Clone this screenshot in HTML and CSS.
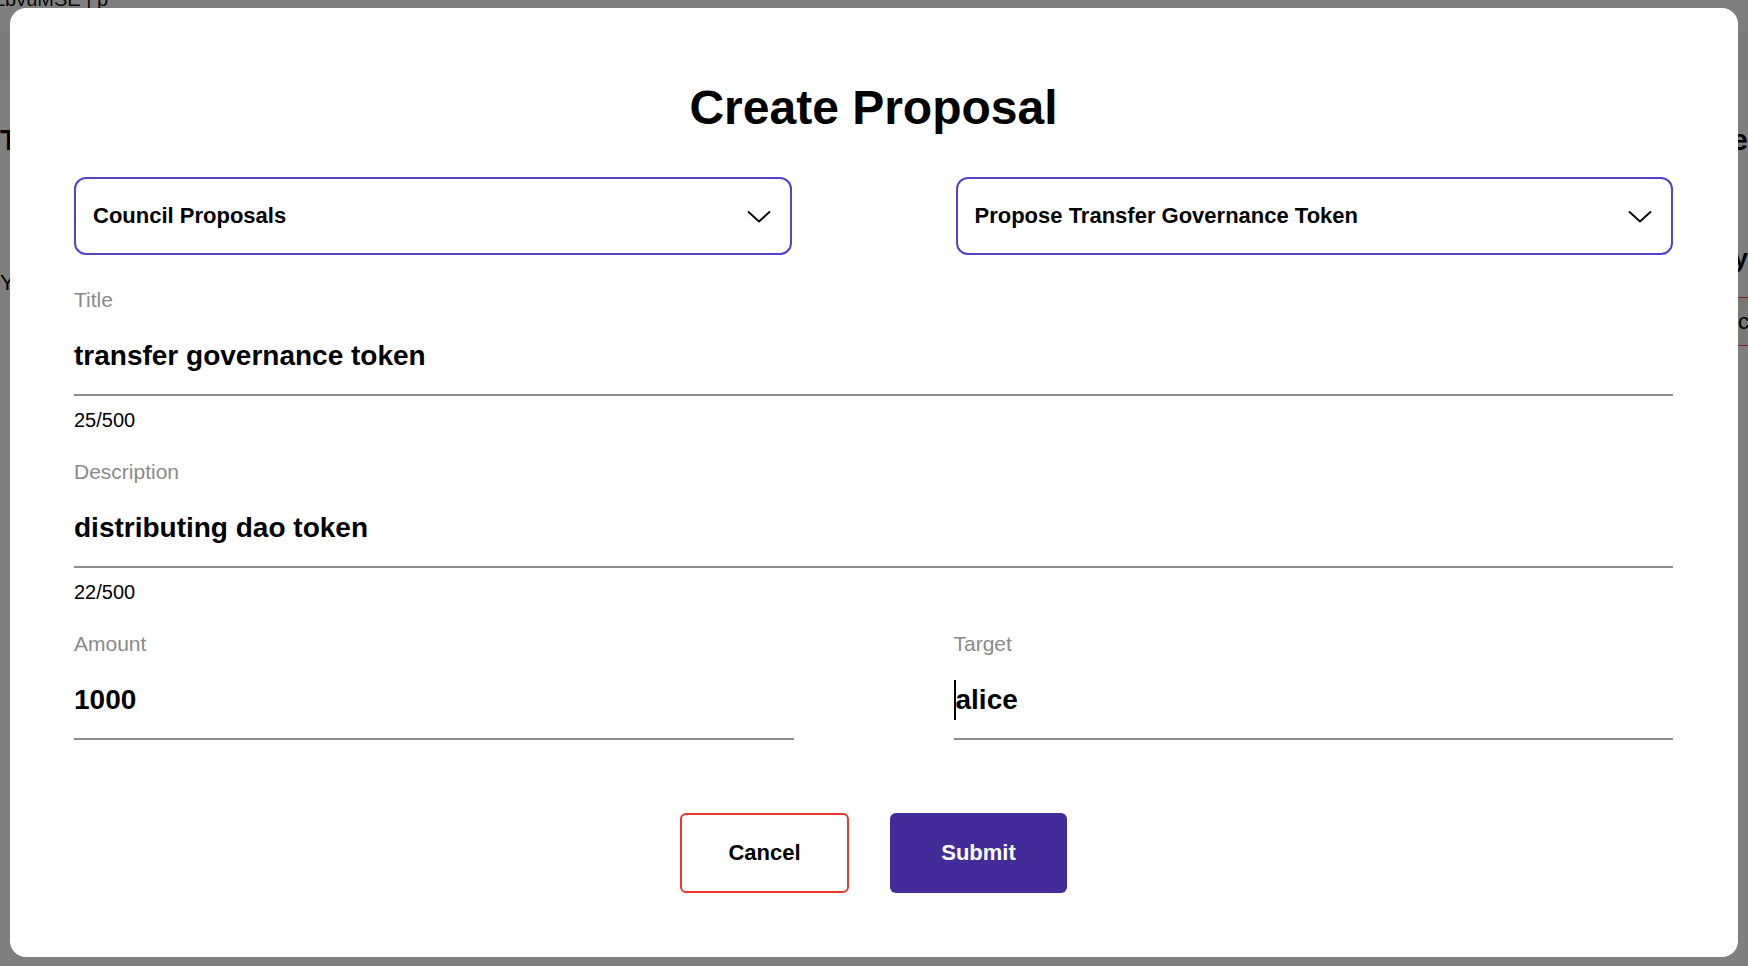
FILE: index.html
```html
<!DOCTYPE html>
<html lang="en">
<head>
<meta charset="utf-8">
<title>Create Proposal</title>
<link rel="stylesheet" href="styles.css">
</head>
<body>
<div class="page">
  <div class="page-top">LbvuMSE | p</div>
  <div class="page-band"></div>
  <div class="page-row page-row-head">
    <span class="page-big">T</span>
    <span class="page-big">e</span>
  </div>
  <div class="page-row page-row-y">
    <span></span>
    <span class="page-mid">y</span>
  </div>
  <div class="page-row page-row-sub">
    <span class="page-small">Y</span>
    <span></span>
  </div>
  <div class="page-row page-row-box">
    <span></span>
    <span class="page-right-box">c</span>
  </div>
</div>

<div class="overlay">
  <div class="modal">
    <h1 class="modal-title">Create Proposal</h1>

    <div class="select-row">
      <div class="select">
        <span>Council Proposals</span>
        <svg class="chevron" width="24" height="13" viewBox="0 0 24 13"><path d="M1 1.5 L12 11.5 L23 1.5" fill="none" stroke="#000" stroke-width="1.8"/></svg>
      </div>
      <div class="select">
        <span>Propose Transfer Governance Token</span>
        <svg class="chevron" width="24" height="13" viewBox="0 0 24 13"><path d="M1 1.5 L12 11.5 L23 1.5" fill="none" stroke="#000" stroke-width="1.8"/></svg>
      </div>
    </div>

    <div class="fields">
      <div class="field">
        <div class="field-label">Title</div>
        <div class="field-input">transfer governance token</div>
        <div class="field-count">25/500</div>
      </div>
      <div class="field">
        <div class="field-label">Description</div>
        <div class="field-input">distributing dao token</div>
        <div class="field-count">22/500</div>
      </div>
      <div class="field-row">
        <div class="field">
          <div class="field-label">Amount</div>
          <div class="field-input">1000</div>
        </div>
        <div class="field">
          <div class="field-label">Target</div>
          <div class="field-input"><span class="caret"></span>alice</div>
        </div>
      </div>
    </div>

    <div class="actions">
      <button class="btn btn-cancel" type="button">Cancel</button>
      <button class="btn btn-submit" type="button">Submit</button>
    </div>
  </div>
</div>
</body>
</html>
```

FILE: styles.css
```css
* {
  box-sizing: border-box;
}

html,
body {
  margin: 0;
  height: 100%;
}

body {
  font-family: "Liberation Sans", Arial, sans-serif;
  color: #000;
  background: #fff;
  overflow: hidden;
}

/* underlying page (mostly hidden by the modal) */
.page {
  width: 100%;
}

.page-top {
  margin-top: -11px;
  margin-left: -6px;
  font-size: 20px;
  line-height: 20px;
  color: #111;
}

.page-band {
  margin-top: 23px;
  height: 48px;
  background: #f4f4f4;
}

.page-row {
  display: flex;
  justify-content: space-between;
  align-items: center;
}

.page-row-head {
  margin-top: 40px;
  height: 40px;
}

.page-big {
  font-size: 30px;
  font-weight: 700;
  line-height: 40px;
}

.page-row-y {
  margin-top: 85px;
  height: 26px;
}

.page-mid {
  font-size: 26px;
  font-weight: 700;
  line-height: 26px;
}

.page-row-sub {
  height: 24px;
}

.page-small {
  font-size: 22px;
  line-height: 24px;
}

.page-row-box {
  margin-top: 2px;
  height: 49px;
}

.page-right-box {
  display: flex;
  align-items: center;
  height: 49px;
  width: 12px;
  padding-left: 2px;
  border-top: 1px solid #e0533f;
  border-bottom: 1px solid #e0533f;
  background: #f6eeee;
  font-size: 22px;
}

/* overlay + modal */
.overlay {
  position: fixed;
  inset: 0;
  background: rgba(0, 0, 0, 0.5);
  padding: 8px 10px;
}

.modal {
  background: #fff;
  border-radius: 16px;
  padding: 72px 65px 64px 64px;
}

.modal-title {
  margin: 0;
  font-size: 48px;
  line-height: 56px;
  font-weight: 700;
  text-align: center;
}

.select-row {
  margin-top: 41px;
  display: grid;
  grid-template-columns: 1fr 1fr;
  column-gap: 164px;
}

.select {
  height: 78px;
  border: 2px solid #5443c6;
  border-radius: 12px;
  display: flex;
  align-items: center;
  justify-content: space-between;
  padding: 0 19px 0 17px;
  font-size: 22px;
  font-weight: 700;
}

.chevron {
  display: block;
  flex: none;
}

.fields {
  margin-top: 33px;
  display: flex;
  flex-direction: column;
  gap: 28px;
}

.field-row {
  display: grid;
  grid-template-columns: 1fr 1fr;
  column-gap: 160px;
}

.field-label {
  font-size: 21px;
  line-height: 24px;
  color: #8a8a8a;
}

.field-input {
  margin-top: 26px;
  font-size: 28px;
  line-height: 36px;
  font-weight: 700;
  padding-bottom: 20px;
  border-bottom: 2px solid #8c8c8c;
  white-space: nowrap;
}

.caret {
  display: inline-block;
  width: 2px;
  height: 40px;
  margin: -4px 0 -4px;
  background: #000;
  vertical-align: -7px;
}

.field-count {
  margin-top: 12px;
  font-size: 20px;
  line-height: 24px;
}

.actions {
  margin-top: 73px;
  display: flex;
  justify-content: center;
  gap: 41px;
}

.btn {
  height: 80px;
  border-radius: 6px;
  font-family: inherit;
  font-size: 22px;
  font-weight: 700;
  cursor: pointer;
}

.btn-cancel {
  width: 169px;
  background: #fff;
  color: #000;
  border: 2px solid #e8372c;
}

.btn-submit {
  width: 177px;
  background: #432c99;
  color: #fff;
  border: none;
}
```
